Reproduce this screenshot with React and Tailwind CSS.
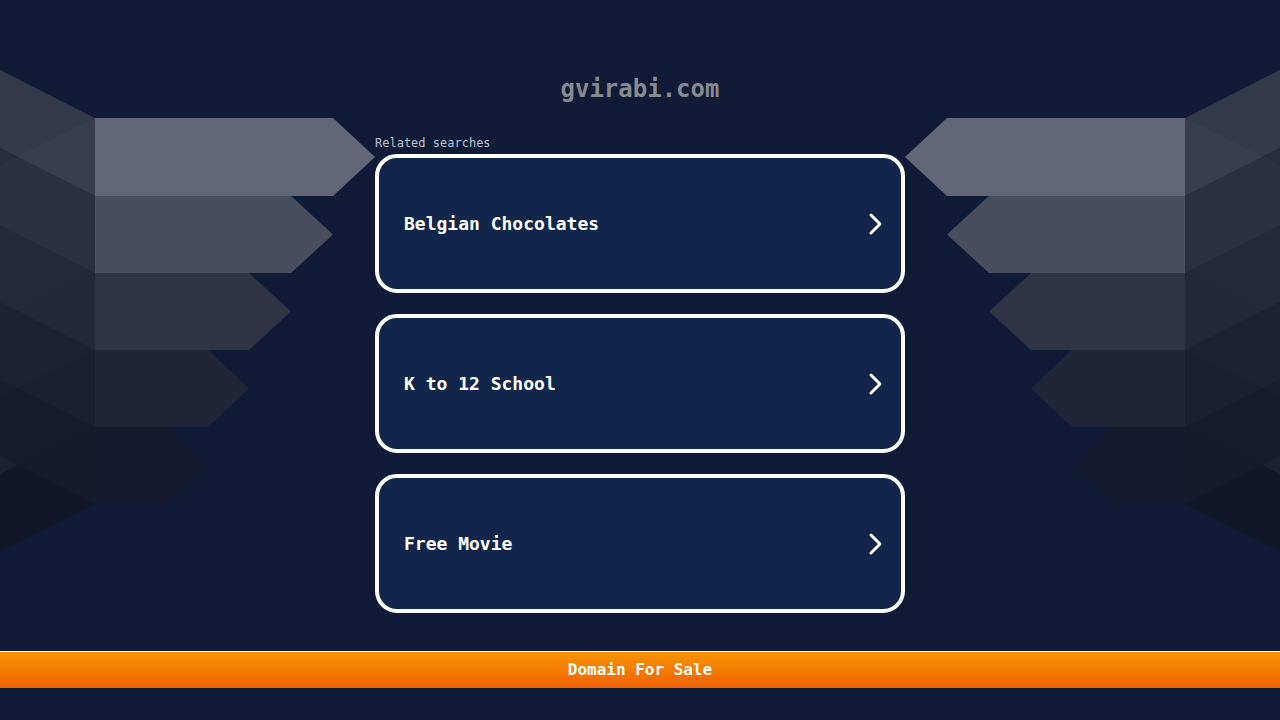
import React from "react";

const bands = [
  { t: 118, b: 196, rx: 333, tip: 375, rect: "#636676", a: "#3b3f50", bb: "#2f3243" },
  { t: 196, b: 273, rx: 291, tip: 333, rect: "#4a4d5e", a: "#2d3041", bb: "#2b2e3f" },
  { t: 273, b: 350, rx: 249, tip: 291, rect: "#2f3344", a: "#252939", bb: "#262a3b" },
  { t: 350, b: 427, rx: 208, tip: 249, rect: "#212538", a: "#1c2033", bb: "#1c2032" },
  { t: 427, b: 504, rx: 167, tip: 207, rect: "#161a2e", a: "#171b2e", bb: "#13172a" },
];

function Side() {
  return (
    <g>
      {bands.map((s, i) => (
        <polygon
          key={"b" + i}
          points={`95,${s.t} 95,${s.b} 0,${s.b + 47} 0,${s.t + 47}`}
          fill={s.bb}
        />
      ))}
      {bands.map((s, i) => (
        <polygon
          key={"a" + i}
          points={`95,${s.t} 95,${s.b} 0,${s.b - 48} 0,${s.t - 48}`}
          fill={s.a}
          fillOpacity="0.85"
        />
      ))}
      {bands.map((s, i) => (
        <polygon
          key={"r" + i}
          points={`95,${s.t} ${s.rx},${s.t} ${s.tip},${(s.t + s.b) / 2} ${s.rx},${s.b} 95,${s.b}`}
          fill={s.rect}
        />
      ))}
    </g>
  );
}

function Chevron() {
  return (
    <svg width="16" height="24" viewBox="0 0 16 24" className="shrink-0">
      <polyline
        points="4,3 13,12 4,21"
        fill="none"
        stroke="white"
        strokeWidth="3"
        strokeLinecap="round"
        strokeLinejoin="round"
      />
    </svg>
  );
}

function Card({ label }) {
  return (
    <div className="h-[139px] rounded-[22px] border-4 border-white bg-[#12264c] flex items-center justify-between pl-[25px] pr-[18px]">
      <span className="text-[18px] font-bold text-white leading-none">{label}</span>
      <Chevron />
    </div>
  );
}

export default function App() {
  return (
    <div
      className="relative min-h-[720px] w-full overflow-hidden bg-[#101c37]"
      style={{ fontFamily: '"DejaVu Sans Mono", "Liberation Mono", monospace' }}
    >
      <svg
        className="absolute inset-0 h-[720px] w-[1280px]"
        viewBox="0 0 1280 720"
        aria-hidden="true"
      >
        <Side />
        <g transform="translate(1280,0) scale(-1,1)">
          <Side />
        </g>
      </svg>

      <div className="relative flex flex-col items-center">
        <div className="mt-[73px] h-[32px] text-[24px] leading-[32px] font-bold text-[#878b91]">
          gvirabi.com
        </div>
        <div className="w-[530px] mt-[30px]">
          <div className="text-[12px] leading-[16px] text-[#b7c3d3]">Related searches</div>
          <div className="mt-[3px] flex flex-col gap-[21px]">
            <Card label="Belgian Chocolates" />
            <Card label="K to 12 School" />
            <Card label="Free Movie" />
          </div>
        </div>
        <div className="mt-[38px] w-full border-t border-white h-[37px] bg-gradient-to-b from-[#f79400] to-[#f06000] flex items-center justify-center">
          <span className="text-[16px] font-bold text-white">Domain For Sale</span>
        </div>
      </div>
    </div>
  );
}
